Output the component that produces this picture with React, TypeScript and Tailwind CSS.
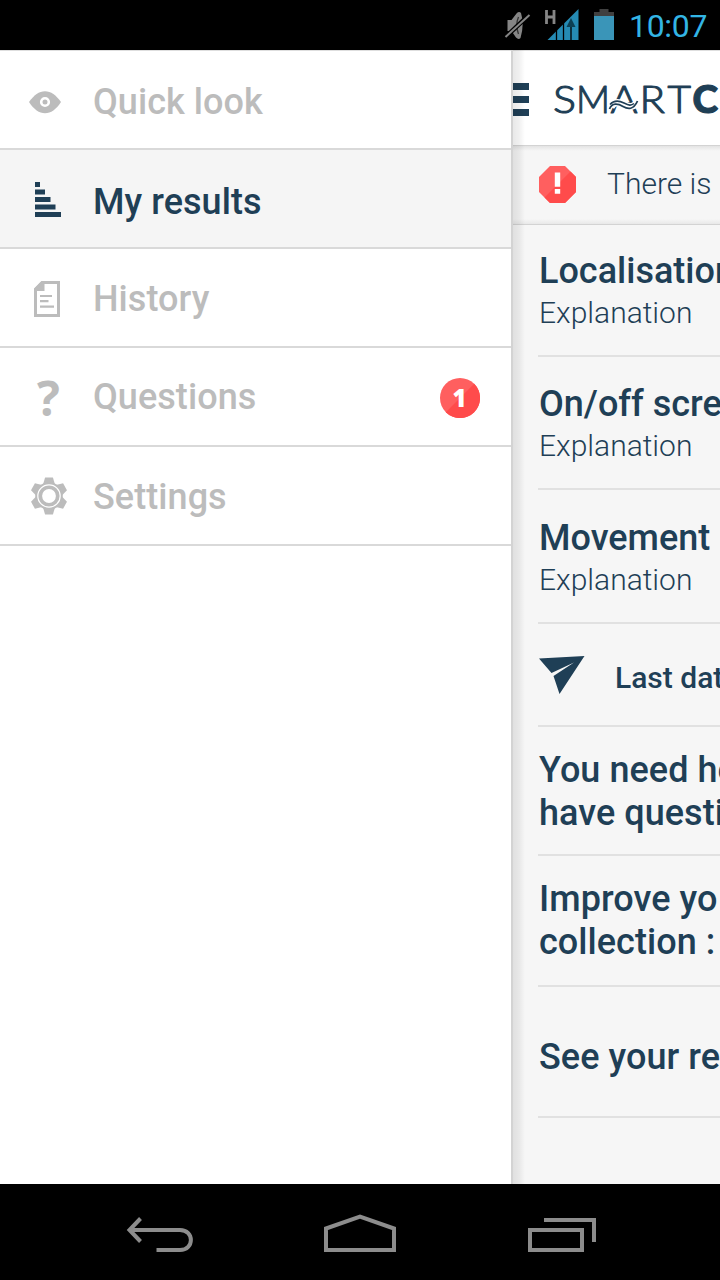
import type { ReactNode } from "react";

const NAVY = "#1f3f56";

function StatusBar() {
  return (
    <header className="flex h-[50px] shrink-0 items-start bg-black pl-[504px]">
      <svg width="120" height="50" viewBox="504 0 120 50" className="shrink-0">
        <path d="M507.500 20h4l5-6.500q2.500-2.500 4.500-.5 3.500 12-.5 25-2 2-4.500-.5l-4.500-6.500h-4z" fill="#858585" />
        <path d="M518.500 17q-3.500 8 0 17" stroke="#333" strokeWidth="1.300" fill="none" />
        <path d="M504 38.500 530 14" stroke="#000" strokeWidth="4.500" />
        <path d="M505.500 37 529.500 15" stroke="#858585" strokeWidth="2" />
        <path d="M546.500 10v14M554 10v14M546.500 17h7.500" stroke="#858585" strokeWidth="2.800" fill="none" />
        <path d="M547.500 40 578.500 9v31z" fill="#258bb4" />
        <path d="M556.500 30v10M563.500 23v17M571 25v15" stroke="#000" strokeWidth="1.300" />
        <path d="m571 18 4.500 9h-9z" fill="#0c4054" />
        <path d="M599.500 9h9v3h5.500v5h-20v-5h5.500z" fill="#404040" />
        <path d="M594 16h20v24h-20z" fill="#3a95b8" />
      </svg>
      <span className="pl-[5px] pt-[5px] font-[Roboto] text-[32px] leading-[42px] tracking-[-0.3px] text-[#33b5e5]">10:07</span>
    </header>
  );
}

function EyeIcon() {
  return (
    <svg width="32" height="23" viewBox="0 0 32 23">
      <path d="M0 11C5 4 10 .2 16 .2S27 4 32 11C27 18.500 22 22.200 16 22.200S5 18.500 0 11z" fill="#bcbcbc" />
      <circle cx="16" cy="11" r="3.800" fill="#bcbcbc" stroke="#fff" strokeWidth="2.600" />
    </svg>
  );
}

function ResultsIcon() {
  return (
    <svg width="27" height="36" viewBox="0 0 27 36">
      <path d="M1 0h5v5H1zM1 7.500h10v5H1zM1 15h15.500v5H1zM1 22.500h20.500v5H1zM1 30h26v5H1z" fill={NAVY} />
    </svg>
  );
}

function HistoryIcon() {
  return (
    <svg width="26" height="36" viewBox="0 0 26 36">
      <path d="M8 1.500h16.500v33h-23V8z" fill="none" stroke="#bcbcbc" strokeWidth="3" />
      <path d="M8 0h2.500v10H0V8z" fill="#bcbcbc" />
      <path d="M6 15h12M6 20.200h8.500M6 25.700h14" stroke="#bcbcbc" strokeWidth="2.200" />
    </svg>
  );
}

function QuestionIcon() {
  return (
    <svg width="24" height="40" viewBox="0 0 24 40" className="overflow-visible">
      <text x="-1" y="36.500" className="fill-[#bcbcbc] font-['Open_Sans'] text-[48px] font-bold">?</text>
    </svg>
  );
}

function GearIcon() {
  return (
    <svg width="36" height="38" viewBox="-18 -19 36 38" fill="#bcbcbc">
      {[0, 60, 120, 180, 240, 300].map((a) => (
        <path key={a} transform={`rotate(${a})`} d="M-3.900-18.500h7.800l2.400 8h-12.600z" />
      ))}
      <circle r="13.800" />
      <circle r="11.200" fill="none" stroke="#fff" strokeWidth="1.200" />
      <circle r="6.900" fill="#fff" />
    </svg>
  );
}

function Badge() {
  return (
    <svg width="40" height="40" viewBox="0 0 40 40" className="mr-[31px] mt-[30px] shrink-0">
      <circle cx="20" cy="20" r="20" fill="#ff5f5f" />
      <path d="M34.200 5.800A20 20 0 0 1 5.800 34.200z" fill="#ff4b4b" />
      <text x="19.500" y="29" textAnchor="middle" className="fill-white font-['Open_Sans'] text-[24px] font-extrabold">1</text>
    </svg>
  );
}

type MenuRowProps = { label: string; icon: ReactNode; iconBox: string; textPad: string; active?: boolean; badge?: boolean };

function MenuRow({ label, icon, iconBox, textPad, active, badge }: MenuRowProps) {
  return (
    <li className={`flex h-[99px] items-start border-b-2 border-[#d9d9d9] ${active ? "bg-[#f5f5f5] text-[#1f3f56]" : "text-[#bcbcbc]"}`}>
      <span className={`w-[93px] shrink-0 ${iconBox}`}>{icon}</span>
      <span className={`flex-1 whitespace-nowrap text-[36px] font-medium leading-[42px] tracking-[0.06px] ${textPad}`}>{label}</span>
      {badge && <Badge />}
    </li>
  );
}

function Drawer() {
  return (
    <nav className="w-[513px] shrink-0 border-r-2 border-[#d3d3d3] bg-white">
      <ul className="border-t border-[#dedede]">
        <MenuRow label="Quick look" icon={<EyeIcon />} iconBox="pl-[29px] pt-[40px]" textPad="pt-[30px]" />
        <MenuRow label="My results" icon={<ResultsIcon />} iconBox="pl-[34px] pt-[32px]" textPad="pt-[31px]" active />
        <MenuRow label="History" icon={<HistoryIcon />} iconBox="pl-[34px] pt-[32px]" textPad="pt-[29px]" />
        <MenuRow label="Questions" icon={<QuestionIcon />} iconBox="pl-[38px] pt-[31px]" textPad="pt-[28px]" badge />
        <MenuRow label="Settings" icon={<GearIcon />} iconBox="pl-[31px] pt-[30px]" textPad="pt-[29px]" />
      </ul>
    </nav>
  );
}

function Logo() {
  return (
    <svg width="168" height="40" viewBox="552 80 168 40" className="ml-[23px] mt-[29px] shrink-0 overflow-visible">
      <g className="fill-[#1f3f56] stroke-[#1f3f56] font-[Lato] text-[38px] font-light" strokeWidth="1.1" strokeLinejoin="round">
        <text x="553" y="113" textLength="23" lengthAdjust="spacingAndGlyphs">S</text>
        <text x="576" y="113" textLength="34" lengthAdjust="spacingAndGlyphs">M</text>
        <text x="610.500" y="113" textLength="27" lengthAdjust="spacingAndGlyphs">A</text>
        <text x="639.500" y="113" textLength="25.500" lengthAdjust="spacingAndGlyphs">R</text>
        <text x="667.500" y="113" textLength="23.500" lengthAdjust="spacingAndGlyphs">T</text>
        <text x="692.500" y="113" textLength="25.500" lengthAdjust="spacingAndGlyphs" className="font-black">C</text>
      </g>
      <path d="M611 107C614 101.500 619 102 624 104.500s9 3.500 12.500-1.500" fill="none" stroke="#fff" strokeWidth="7" />
      <path d="M609.500 109C612 102.500 618 103.500 623 106.500s10.500 3.500 14.500-5.500" fill="none" stroke={NAVY} strokeWidth="1.800" />
      <path d="M610 104.500C614 100 619 100.500 624 103s7 3 10 .5" fill="none" stroke={NAVY} strokeWidth="1.600" />
    </svg>
  );
}

function AlertIcon() {
  return (
    <svg width="37" height="37" viewBox="0 0 37 37" className="ml-[26px] mt-[20px] shrink-0">
      <path d="M11 0h15l11 11v15L26 37H11L0 26V11z" fill="#ff5f5f" />
      <path d="M31.500 5.500 37 11v15L26 37H11l-5.500-5.500z" fill="#ff4b4b" />
      <path d="M15.800 6.500h5.400v14.300h-5.400zM15.800 23h5.400v4.800h-5.400z" fill="#fff" />
    </svg>
  );
}

function Entry({ title, height, pad }: { title: string; height: string; pad: string }) {
  return (
    <article className={`ml-[25px] border-b-2 border-[#e1e1e1] pl-px whitespace-nowrap ${height} ${pad}`}>
      <h2 className="text-[36px] font-medium leading-[42px]">{title}</h2>
      <p className="mt-[3px] text-[30px] font-light leading-[36px]">Explanation</p>
    </article>
  );
}

function Note({ lines, box }: { lines: string[]; box: string }) {
  return (
    <article className={`ml-[25px] border-b-2 border-[#e1e1e1] pl-px text-[36px] font-medium leading-[43px] tracking-[0.05px] whitespace-nowrap ${box}`}>
      {lines.map((line) => (
        <p key={line}>{line}</p>
      ))}
    </article>
  );
}

function Results() {
  return (
    <main className="relative min-w-0 flex-1 overflow-hidden bg-[#f6f6f6] text-[#1f3f56]">
      <div className="flex h-[96px] items-start overflow-hidden border-b border-t border-b-[#d3d3d3] border-t-[#dedede] bg-white">
        <div className="mt-[32px] flex w-4 shrink-0 flex-col gap-1.5">
          <span className="h-[7px] bg-[#1f3f56]" />
          <span className="h-[7px] bg-[#1f3f56]" />
          <span className="h-[7px] bg-[#1f3f56]" />
        </div>
        <Logo />
      </div>
      <div className="flex h-[79px] items-start overflow-hidden border-b border-[#d3d3d3] bg-[linear-gradient(#e4e4e4,#f6f6f6_5px,#f6f6f6_73px,#e8e8e8)] whitespace-nowrap">
        <AlertIcon />
        <p className="ml-[31px] mt-[20px] text-[30px] font-light leading-[36px]">There is</p>
      </div>
      <Entry title="Localisation" height="h-[132px]" pad="pt-[25px]" />
      <Entry title="On/off scre" height="h-[133px]" pad="pt-[26px]" />
      <Entry title="Movement" height="h-[134px]" pad="pt-[27px]" />
      <div className="ml-[25px] flex h-[103px] items-start border-b-2 border-[#e1e1e1] pl-px whitespace-nowrap">
        <svg width="46" height="38" viewBox="0 0 46 38" fill={NAVY} className="mt-[32px] shrink-0">
          <path d="M0 2.500 45.500 0 20.500 38l-6-18L35 6.500 12.500 17z" />
        </svg>
        <p className="ml-[30px] mt-[36px] text-[30px] font-medium leading-[36px]">Last dat</p>
      </div>
      <Note lines={["You need he", "have questi"]} box="h-[129px] pt-[22px]" />
      <Note lines={["Improve yo", "collection :"]} box="h-[131px] pt-[22px]" />
      <Note lines={["See your re"]} box="h-[131px] pt-[49px]" />
      <div className="pointer-events-none absolute inset-y-0 left-0 w-3 bg-gradient-to-r from-black/9 via-black/6 to-transparent" />
    </main>
  );
}

function NavigationBar() {
  return (
    <footer className="flex h-24 shrink-0 items-start bg-black">
      <svg width="720" height="96" viewBox="0 1184 720 96" fill="none" stroke="#8c8c8c" strokeWidth="4">
        <path d="M130 1230h50c14.500 0 14.500 20 0 20h-23.500" />
        <path d="m140.500 1218.500-11 11.500 11 11.500" />
        <path d="M326 1250v-21.500l34-12 34 12v21.500z" />
        <path d="M530 1230h52v20h-52zM544 1220h50v22" />
      </svg>
    </footer>
  );
}

export default function App() {
  return (
    <div className="flex h-[1280px] w-[720px] flex-col overflow-hidden bg-white font-[Roboto,sans-serif]">
      <StatusBar />
      <div className="flex min-h-0 flex-1">
        <Drawer />
        <Results />
      </div>
      <NavigationBar />
    </div>
  );
}
